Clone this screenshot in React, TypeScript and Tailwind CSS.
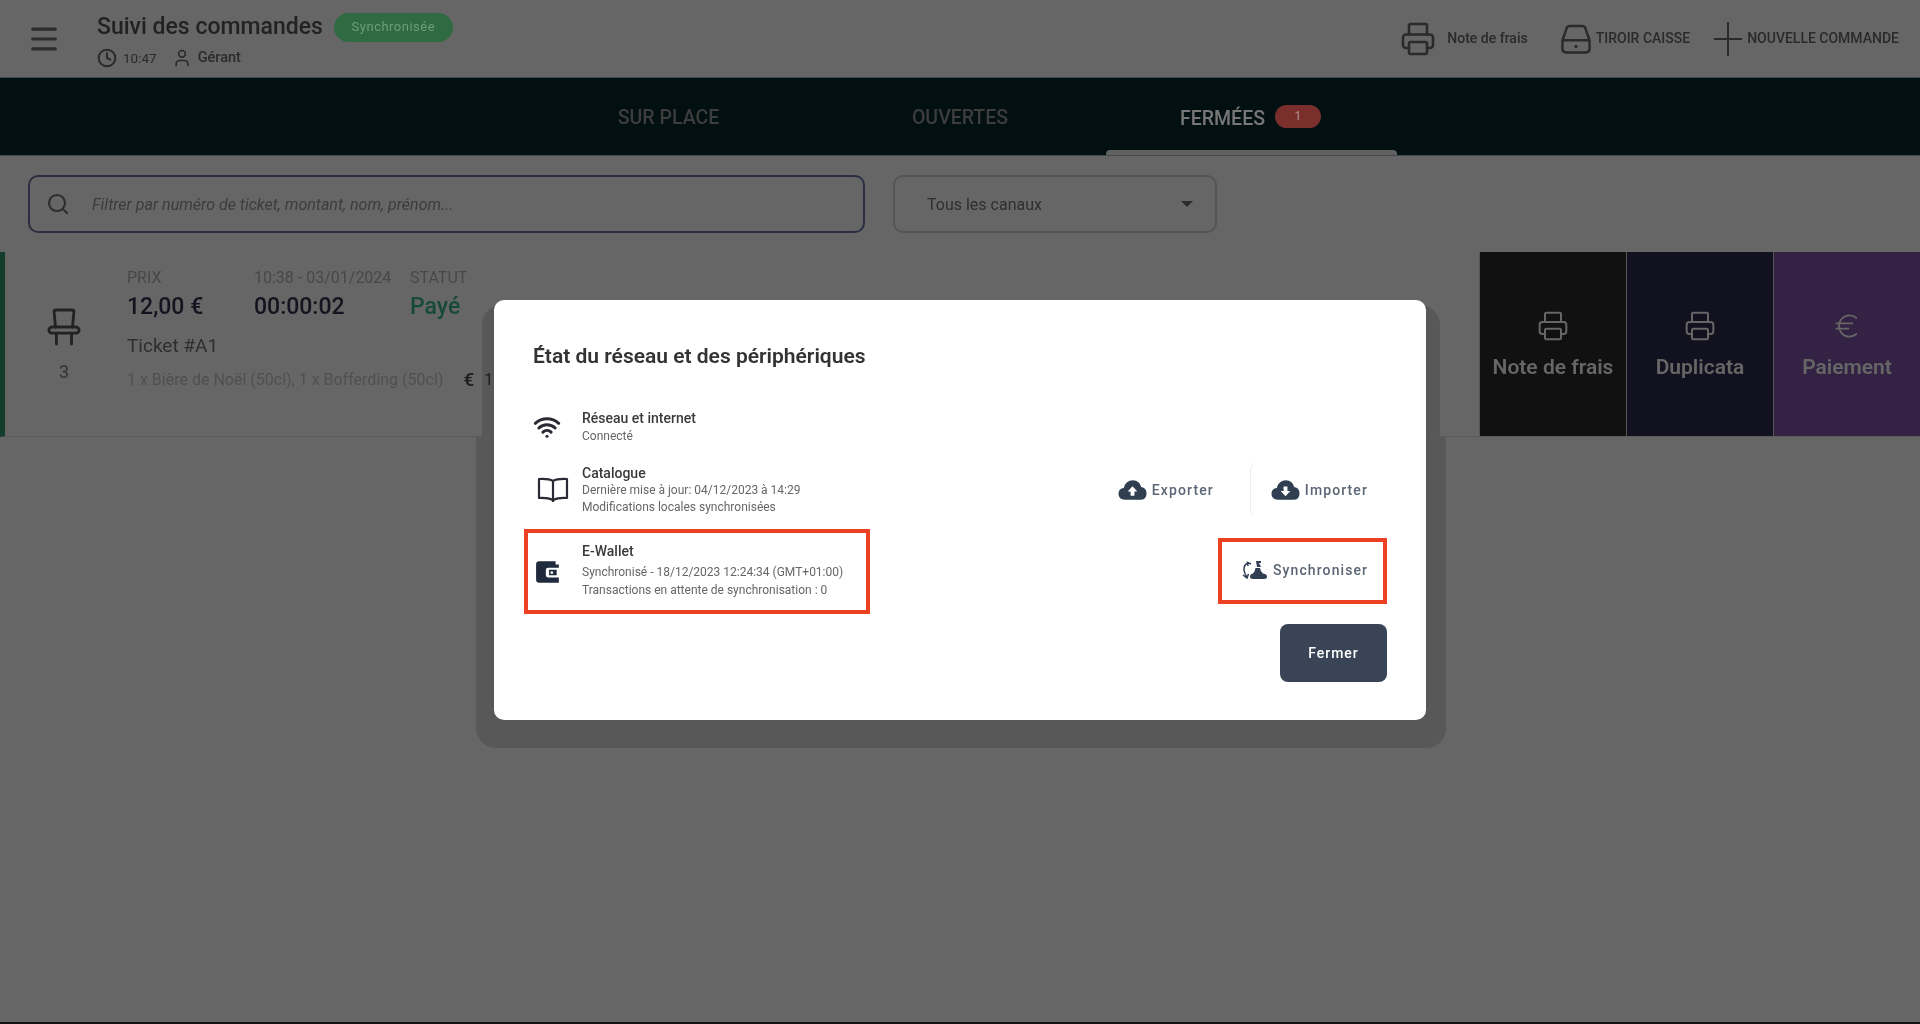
import React from "react";
import { Menu, Clock, User, Printer, Search, Euro, Wifi } from "lucide-react";

function Drawer({ className = "" }: { className?: string }) {
  return (
    <svg viewBox="0 0 26 26" fill="none" stroke="currentColor" strokeWidth="2" className={className}>
      <path d="M2 14 L5.5 4 Q6 2.5 8 2.5 H18 Q20 2.5 20.5 4 L24 14 V21 Q24 24 21 24 H5 Q2 24 2 21 Z" />
      <path d="M2 14 H24" />
      <circle cx="13" cy="19" r="1.4" fill="currentColor" stroke="none" />
    </svg>
  );
}

function Chair({ className = "" }: { className?: string }) {
  return (
    <svg viewBox="0 0 36 40" fill="none" stroke="currentColor" strokeWidth="3" strokeLinecap="round" className={className}>
      <path d="M9 20 L7.5 4 Q7.5 2 10 2 H26 Q28.500 2 28.500 4 L27 20" />
      <rect x="2" y="20" width="32" height="6.500" rx="3.250" />
      <path d="M10 27 V38 M26 27 V38" />
    </svg>
  );
}

function OpenBook({ className = "" }: { className?: string }) {
  return (
    <svg viewBox="0 0 32 26" fill="none" stroke="currentColor" strokeWidth="2.200" strokeLinejoin="round" className={className}>
      <path d="M16 4 Q12 1.500 2 2 V21 Q11 20.500 16 23 Q21 20.500 30 21 V2 Q20 1.500 16 4 Z" />
      <path d="M16 4 V25" />
    </svg>
  );
}

function Wallet({ className = "" }: { className?: string }) {
  return (
    <svg viewBox="0 0 24 24" fill="currentColor" className={className}>
      <path fillRule="evenodd" d="M4 2 H19 V5 H22 V22 H4 Q1 22 1 19 V5 Q1 2 4 2 Z M12 8 Q10 8 10 10 V15 Q10 17 12 17 H22 V8 Z" />
      <path fillRule="evenodd" d="M13 10 H20 V15 H13 Z M15.500 11.200 a1.300 1.300 0 1 0 .01 0 Z" />
    </svg>
  );
}

function CloudArrow({ up, className = "" }: { up?: boolean; className?: string }) {
  return (
    <svg viewBox="0 0 30 22" className={className}>
      <path fill="currentColor" d="M7 21 Q0.500 21 0.500 15 Q0.500 9.500 6 9 Q8 1 15.500 1 Q22 1 24 8 Q29.500 9 29.500 14.500 Q29.500 21 23 21 Z" />
      {up ? (
        <path fill="#fff" d="M15 7 L20 12.500 H17 V17 H13 V12.500 H10 Z" />
      ) : (
        <path fill="#fff" d="M15 17.500 L20 12 H17 V7.500 H13 V12 H10 Z" />
      )}
    </svg>
  );
}

function SyncCloud({ className = "" }: { className?: string }) {
  return (
    <svg viewBox="0 0 26 20" className={className}>
      <path fill="none" stroke="currentColor" strokeWidth="1.500" d="M6 3 Q1.500 5 2 10 Q2.500 14 5 17 M1 15 L5 18 L6.500 14 M9 4 L5.500 2.500 L6 6" />
      <path fill="currentColor" d="M11 19 Q8 19 8 16.500 Q8 14 11 13.500 Q13 12 13.500 8 H18 Q18.500 12 21 13.500 Q25 14 25 16.500 Q25 19 22 19 Z" />
      <path fill="currentColor" d="M14 1 H19 V3 H17 L19 7 H15 Z" />
    </svg>
  );
}

function Row({ icon, title, lines, iconW = "w-[49px]", leading = "leading-[18px]", titleClass = "" }: { icon: React.ReactNode; title: string; lines: string[]; iconW?: string; leading?: string; titleClass?: string }) {
  return (
    <div className="flex items-center">
      <div className={`${iconW} flex justify-start text-[#2f3e50]`}>{icon}</div>
      <div className="flex flex-col">
        <div className={`text-[14px] ${leading} font-medium text-[#3a3a3a] ${titleClass}`}>{title}</div>
        {lines.map((l) => (
          <div key={l} className={`text-[12px] ${leading} text-[#666]`}>{l}</div>
        ))}
      </div>
    </div>
  );
}

function TextAction({ icon, label }: { icon: React.ReactNode; label: string }) {
  return (
    <div className="flex items-center gap-[5px] text-[#2f3e50]">
      {icon}
      <span className="text-[14px] font-medium tracking-[1.100px] text-[#5b6575]">{label}</span>
    </div>
  );
}

function Stat({ label, value, w, color = "text-[#141420]" }: { label: string; value: string; w: string; color?: string }) {
  return (
    <div className={`flex flex-col ${w}`}>
      <div className="text-[16px] leading-[18px] text-[#484848]">{label}</div>
      <div className={`mt-[4px] text-[23px] leading-[32px] font-medium ${color}`}>{value}</div>
    </div>
  );
}

function SideButton({ icon, label, bg }: { icon: React.ReactNode; label: string; bg: string }) {
  return (
    <div className={`flex-1 h-full ${bg} flex flex-col items-center pt-[58px] text-[#666] border-l border-[#555]`}>
      {icon}
      <div className="mt-[13px] text-[21px] leading-[24px] font-semibold">{label}</div>
    </div>
  );
}

export default function App() {
  return (
    <div className="relative h-[1024px] w-full overflow-hidden bg-[#666666] border-b-2 border-[#111] blur-[0.5px]">
      {/* dialog's shadow, behind the page content */}
      <div className="absolute left-[482px] top-[305px] w-[958px] h-[131px] rounded-t-[20px] bg-[#585858]" />
      <div className="absolute left-[476px] top-[436px] w-[970px] h-[312px] rounded-b-[20px] bg-[#585858]" />

      <div className="relative flex flex-col h-full font-['Roboto',sans-serif]">
        <header className="h-[77px] flex items-center shrink-0 text-[#222]">
          <Menu className="ml-[27px] w-[34px] h-[34px] text-[#2c2c2c]" strokeWidth={2.200} />
          <div className="ml-[36px] mt-[4px] flex flex-col">
            <div className="flex items-center gap-[11px] h-[30px]">
              <span className="text-[23px] font-medium leading-[28px] text-[#222]">Suivi des commandes</span>
              <span className="h-[29px] w-[119px] rounded-full bg-[#2f6a42] flex items-center justify-center text-[13px] text-[#6f9c7c] tracking-[0.5px]">Synchronisée</span>
            </div>
            <div className="flex items-center mt-[5px] h-[22px] text-[14px] text-[#2a2a2a]">
              <Clock className="w-[20px] h-[20px]" strokeWidth={2.400} />
              <span className="ml-[6px] text-[13.500px]">10:47</span>
              <User className="ml-[15px] w-[20px] h-[20px]" strokeWidth={2} />
              <span className="ml-[6px] font-medium text-[14.500px]">Gérant</span>
            </div>
          </div>
          <div className="ml-auto flex items-center pr-[21px] text-[14px] font-medium text-[#2a2a2a]">
            <Printer className="w-[36px] h-[36px]" strokeWidth={1.700} />
            <span className="ml-[11px]">Note de frais</span>
            <Drawer className="ml-[32px] mr-[4px] w-[32px] h-[32px]" />
            <span>TIROIR CAISSE</span>
            <svg viewBox="0 0 28 34" className="ml-[24px] w-[28px] h-[34px]" fill="none" stroke="currentColor" strokeWidth="2">
              <path d="M0 17 H28 M14 0 V34" />
            </svg>
            <span className="ml-[5px]">NOUVELLE COMMANDE</span>
          </div>
        </header>

        <nav className="h-[79px] shrink-0 bg-[#021012] border-y border-[#3f4a4c] flex justify-center">
          <div className="flex items-stretch">
            <div className="w-[291px] flex items-center justify-center pt-[3px] text-[19.500px] font-medium text-[#3d3d3d]">SUR PLACE</div>
            <div className="w-[292px] flex items-center justify-center pt-[3px] text-[19.500px] font-medium text-[#3d3d3d]">OUVERTES</div>
            <div className="relative w-[291px] flex items-center justify-center gap-[10px] pt-[5px] text-[19.500px] font-medium text-[#777]">
              <span className="-ml-[2px]">FERMÉES</span>
              <span className="-mt-[6px] w-[46px] h-[23px] rounded-full bg-[#7a2f2d] flex items-center justify-center text-[12px] text-[#aa8080]">1</span>
              <span className="absolute left-0 right-0 bottom-0 h-[5px] rounded-t-[4px] bg-[#616161]" />
            </div>
          </div>
        </nav>

        <div className="flex gap-[28px] px-[28px] pt-[19px] shrink-0">
          <div className="w-[837px] h-[58px] rounded-[10px] border-2 border-[#2b2d40] flex items-center">
            <Search className="ml-[16px] w-[24px] h-[24px] text-[#2e2e2e]" strokeWidth={2.200} />
            <span className="ml-[22px] pt-[2px] text-[16px] italic text-[#3c3c3c]">Filtrer par numéro de ticket, montant, nom, prénom...</span>
          </div>
          <div className="w-[324px] h-[58px] rounded-[10px] border-2 border-[#555] flex items-center pl-[32px] pr-[22px] justify-between text-[16px] text-[#2f2f2f]">
            <span className="pt-[2px]">Tous les canaux</span>
            <svg viewBox="0 0 12 6" className="w-[12px] h-[6px] text-[#2b2b2b]"><path d="M0 0 H12 L6 6 Z" fill="currentColor" /></svg>
          </div>
        </div>

        <div className="mt-[19px] h-[185px] shrink-0 flex border-b border-[#5a5a5a] border-l-[5px] border-l-[#133d2a]">
          <div className="w-[122px] pr-[4px] flex flex-col items-center pt-[55px] text-[#222]">
            <Chair className="w-[34px] h-[40px]" />
            <div className="mt-[14px] text-[18px] leading-[22px] text-[#333]">3</div>
          </div>
          <div className="flex flex-col pt-[17px]">
            <div className="flex">
              <Stat label="PRIX" value="12,00 €" w="w-[127px]" />
              <Stat label="10:38 - 03/01/2024" value="00:00:02" w="w-[156px]" />
              <Stat label="STATUT" value="Payé" w="w-[100px]" color="text-[#174a3b]" />
            </div>
            <div className="mt-[9px] text-[19px] leading-[28px] text-[#2e2e2e]">Ticket #A1</div>
            <div className="mt-[8px] flex items-center text-[16px] leading-[24px] text-[#505050]">
              1 x Bière de Noël (50cl), 1 x Bofferding (50cl)
              <span className="ml-[20px] text-[19px] font-medium text-[#1c1c1c]">€</span>
              <span className="ml-[10px] text-[#1c1c1c]">1</span>
            </div>
          </div>
          <div className="ml-auto w-[441px] h-full flex">
            <SideButton bg="bg-[#111111]" label="Note de frais" icon={<Printer className="w-[32px] h-[32px]" strokeWidth={1.500} />} />
            <SideButton bg="bg-[#11111f]" label="Duplicata" icon={<Printer className="w-[32px] h-[32px]" strokeWidth={1.500} />} />
            <SideButton bg="bg-[#332244]" label="Paiement" icon={<Euro className="w-[32px] h-[32px]" strokeWidth={1.300} />} />
          </div>
        </div>
      </div>

      {/* dialog */}
      <div className="absolute left-[494px] top-[300px] w-[932px] h-[420px] rounded-[10px] bg-white pt-[42px] pl-[39px] pr-[39px] font-['Roboto',sans-serif] flex flex-col">
        <h2 className="text-[21px] leading-[28px] font-semibold text-[#333]">État du réseau et des périphériques</h2>
        <div className="mt-[35px] h-[44px] flex items-center">
          <Row icon={<Wifi className="w-[28px] h-[28px] text-[#2a2a35]" strokeWidth={2.600} />} title="Réseau et internet" lines={["Connecté"]} />
        </div>
        <div className="mt-[11px] h-[60px] flex items-center justify-between">
          <Row leading="leading-[17px]" icon={<OpenBook className="ml-[4px] w-[32px] h-[26px] text-[#2a2a35]" />} title="Catalogue" lines={["Dernière mise à jour: 04/12/2023 à 14:29", "Modifications locales synchronisées"]} />
          <div className="flex items-center pr-[19px]">
            <TextAction icon={<CloudArrow up className="w-[29px] h-[22px]" />} label="Exporter" />
            <div className="ml-[36px] mr-[15px] w-[6px] h-[54px] border-l border-[#eeeeee] rounded-l-[10px]" />
            <TextAction icon={<CloudArrow className="w-[29px] h-[22px]" />} label="Importer" />
          </div>
        </div>
        <div className="mt-[9px] h-[85px] flex justify-between">
          <div className="-ml-[9px] w-[346px] h-[85px] border-[4px] border-[#ee4023] flex items-center pl-[7px]">
            <Row titleClass="-mt-[3px] pb-[3px]" iconW="w-[47px]" icon={<Wallet className="w-[26px] h-[26px] text-[#1f2a3c]" />} title="E-Wallet" lines={["Synchronisé - 18/12/2023 12:24:34 (GMT+01:00)", "Transactions en attente de synchronisation : 0"]} />
          </div>
          <div className="mt-[9px] w-[169px] h-[66px] border-[4px] border-[#ee4023] flex items-center pl-[20px] pb-[2px]">
            <TextAction icon={<SyncCloud className="w-[26px] h-[20px] text-[#2f3e50]" />} label="Synchroniser" />
          </div>
        </div>
        <div className="mt-[10px] flex justify-end">
          <div className="w-[107px] h-[58px] rounded-[8px] bg-[#394556] text-white text-[14px] font-medium tracking-[1px] flex items-center justify-center">Fermer</div>
        </div>
      </div>
    </div>
  );
}
